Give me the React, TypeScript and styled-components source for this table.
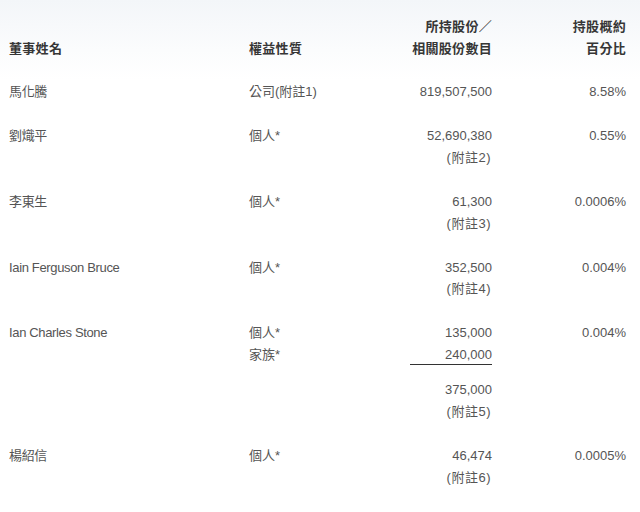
import styled, { createGlobalStyle } from 'styled-components'

const GlobalStyle = createGlobalStyle`
    html, body {
        margin: 0;
        padding: 0;
        background: #ffffff;
    }
    body {
        font-family: "Liberation Sans", "Noto Sans CJK TC", sans-serif;
        -webkit-font-smoothing: antialiased;
    }
`

type Holding = {
    name: string
    nature: string[]
    shares: string[]
    subtotal?: string
    note?: string
    percent: string
}

const holdings: Holding[] = [
    { name: '馬化騰', nature: ['公司(附註1)'], shares: ['819,507,500'], percent: '8.58%' },
    { name: '劉熾平', nature: ['個人*'], shares: ['52,690,380'], note: '(附註2)', percent: '0.55%' },
    { name: '李東生', nature: ['個人*'], shares: ['61,300'], note: '(附註3)', percent: '0.0006%' },
    {
        name: 'Iain Ferguson Bruce',
        nature: ['個人*'],
        shares: ['352,500'],
        note: '(附註4)',
        percent: '0.004%',
    },
    {
        name: 'Ian Charles Stone',
        nature: ['個人*', '家族*'],
        shares: ['135,000', '240,000'],
        subtotal: '375,000',
        note: '(附註5)',
        percent: '0.004%',
    },
    { name: '楊紹信', nature: ['個人*'], shares: ['46,474'], note: '(附註6)', percent: '0.0005%' },
]

export default function App() {
    return (
        <>
            <GlobalStyle />
            <Page>
                <Table>
                    <HeaderRow>
                        <HeadCell>董事姓名</HeadCell>
                        <HeadCell>權益性質</HeadCell>
                        <HeadCell $right>
                            <div>所持股份／</div>
                            <div>相關股份數目</div>
                        </HeadCell>
                        <HeadCell $right>
                            <div>持股概約</div>
                            <div>百分比</div>
                        </HeadCell>
                    </HeaderRow>
                    {holdings.map((h) => (
                        <Row key={h.name}>
                            <NameCell>{h.name}</NameCell>
                            <Cell>
                                {h.nature.map((n) => (
                                    <Line key={n}>{n}</Line>
                                ))}
                            </Cell>
                            <Cell $right>
                                {h.shares.map((s) => (
                                    <Line key={s}>{s}</Line>
                                ))}
                                {h.subtotal && (
                                    <>
                                        <Rule />
                                        <Line>{h.subtotal}</Line>
                                    </>
                                )}
                                {h.note && <Note>{h.note}</Note>}
                            </Cell>
                            <Cell $right>{h.percent}</Cell>
                        </Row>
                    ))}
                </Table>
            </Page>
        </>
    )
}

const Page = styled.div`
    width: 640px;
    height: 512px;
    overflow: hidden;
    background: linear-gradient(180deg, #f3f6f9 0px, #fbfcfd 50px, #ffffff 80px);
`

const Table = styled.div`
    display: flex;
    flex-direction: column;
    gap: 22px;
    padding: 16px 14px 0 9px;
`

const Columns = styled.div`
    display: grid;
    grid-template-columns: 240px 120px 123px 134px;
`

const HeaderRow = styled(Columns)`
    align-items: end;
`

const Row = styled(Columns)`
    align-items: start;
`

const HeadCell = styled.div<{ $right?: boolean }>`
    font-size: 13px;
    line-height: 21.5px;
    font-weight: 700;
    color: #363636;
    letter-spacing: 0.3px;
    text-align: ${(p) => (p.$right ? 'right' : 'left')};
`

const Cell = styled.div<{ $right?: boolean }>`
    display: flex;
    flex-direction: column;
    align-items: ${(p) => (p.$right ? 'flex-end' : 'flex-start')};
    font-size: 13px;
    line-height: 21.9px;
    color: #555555;
`

const NameCell = styled(Cell)`
    letter-spacing: -0.35px;
`

const Line = styled.div`
    white-space: nowrap;
`

const Note = styled(Line)`
    letter-spacing: 0.5px;
    margin-right: 1px;
`

const Rule = styled.div`
    width: 82px;
    height: 0;
    border-top: 1.5px solid #333333;
    margin: -2px 0 14px;
`
